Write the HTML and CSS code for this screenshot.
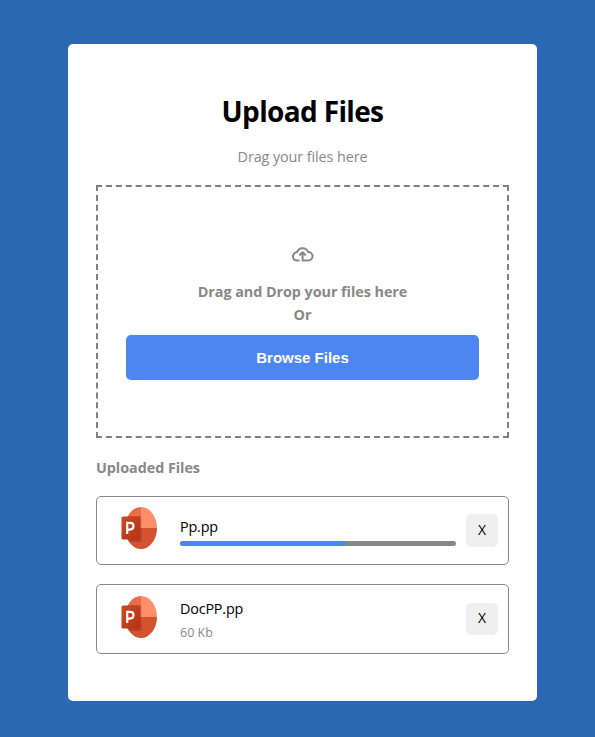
FILE: index.html
```html
<!DOCTYPE html>
<html lang="en">
<head>
<meta charset="utf-8">
<title>Upload Files</title>
<link rel="stylesheet" href="styles.css">
</head>
<body>
<svg class="defs" aria-hidden="true">
  <defs>
    <linearGradient id="badge" x1="0" y1="0" x2="1" y2="1"><stop offset="0" stop-color="#ca4c28"/><stop offset="1" stop-color="#b7310f"/></linearGradient>
    <clipPath id="disc"><ellipse cx="20" cy="21" rx="16" ry="21"/></clipPath>
    <symbol id="ppt" viewBox="0 0 37 42">
      <g clip-path="url(#disc)">
        <path fill="#ed6c47" d="M0 0h20v21H0z"/>
        <path fill="#ff8f6b" d="M20 0h17v21H20z"/>
        <path fill="#d35230" d="M0 21h37v21H0z"/>
        <path fill="#000" opacity=".16" d="M3 9h16q1.500 0 1.500 1.500V33.500q0 1.500-1.500 1.500H3z"/>
      </g>
      <rect x=".5" y="9.500" width="18.500" height="23" rx="1.500" fill="url(#badge)"/>
      <path fill="none" stroke="#fff" stroke-width="2.200" d="M6.200 27V15.800h2.800c2.300 0 3.500 1.100 3.500 3.300s-1.400 3.500-3.600 3.500H6.200"/>
    </symbol>
  </defs>
</svg>
<main class="card">
  <h1 class="title">Upload Files</h1>
  <p class="subtitle">Drag your files here</p>
  <section class="dropzone">
    <svg class="cloud" viewBox="0 0 22 16" aria-hidden="true"><path d="M7.700 14.500H5.200A4.100 4.100 0 0 1 4.900 6.300 6 6 0 0 1 16.200 6.100 4.200 4.200 0 0 1 16.500 14.500H10.600V6.700M7.300 9.500l3.300-3.300 3.300 3.300"/></svg>
    <p class="hint hint-main">Drag and Drop your files here</p>
    <p class="hint">Or</p>
    <button class="browse">Browse Files</button>
  </section>
  <h2 class="section-title">Uploaded Files</h2>
  <div class="files">
    <article class="file">
      <svg class="file-icon"><use href="#ppt"/></svg>
      <div class="info">
        <span class="name">Pp.pp</span>
        <div class="track"><div class="fill" style="width:60%"></div></div>
      </div>
      <button class="remove">X</button>
    </article>
    <article class="file file-done">
      <svg class="file-icon"><use href="#ppt"/></svg>
      <div class="info">
        <span class="name name-done">DocPP.pp</span>
        <span class="size">60 Kb</span>
      </div>
      <button class="remove">X</button>
    </article>
  </div>
</main>
</body>
</html>
```

FILE: styles.css
```css
* { box-sizing: border-box; margin: 0; padding: 0; }
body {
  background: #2b67b3;
  font-family: "Open Sans", "Noto Sans", sans-serif;
  font-size: 14.4px;
  padding: 44px 58px 36px 68px;
}
.defs { display: block; width: 0; height: 0; }
.card {
  width: 469px;
  height: 657px;
  padding: 47px 28px 0;
  background: #fff;
  border-radius: 5px;
}
.title { height: 40px; line-height: 40px; font-size: 28px; text-align: center; letter-spacing: -0.65px; }
.subtitle { margin-top: 15px; height: 22px; line-height: 22px; text-align: center; color: #888; letter-spacing: -0.1px; }
.dropzone {
  display: flex;
  flex-direction: column;
  align-items: center;
  height: 253px;
  margin-top: 17px;
  padding: 59px 28px 0;
  border: 2px dashed #808080;
}
.cloud { width: 22px; height: 16px; fill: none; stroke: #888; stroke-width: 2; stroke-linejoin: round; }
.hint { height: 23px; line-height: 23px; color: #888; font-weight: 700; letter-spacing: -0.06px; }
.hint-main { margin-top: 18px; }
.browse {
  width: 100%;
  height: 45px;
  margin-top: 9px;
  border: 0;
  border-radius: 5px;
  background: #4d86f1;
  color: #fff;
  font: 700 15px "Liberation Sans", sans-serif;
}
.section-title { height: 22px; margin-top: 19px; line-height: 22px; font-size: 14.4px; color: #888; letter-spacing: -0.06px; }
.files { display: grid; gap: 19px; margin-top: 17px; }
.file {
  display: flex;
  align-items: center;
  height: 69px;
  padding: 0 10px 0 24px;
  border: 1px solid #888;
  border-radius: 5px;
}
.file-done { height: 70px; }
.file-icon { width: 37px; height: 42px; margin-top: -5px; }
.info { display: flex; flex-direction: column; width: 276px; margin: 0 10px 0 22px; }
.name { height: 22px; line-height: 22px; letter-spacing: -0.2px; color: #000; }
.name-done { margin-top: 2px; }
.track { height: 5px; margin-top: 3px; background: #888; border-radius: 3px; overflow: hidden; }
.fill { height: 5px; background: #4d86f1; border-radius: 3px; }
.size { height: 20px; margin-top: 3px; line-height: 20px; font-size: 12.500px; color: #888; }
.remove { width: 32px; height: 33px; padding-bottom: 3px; border: 0; border-radius: 5px; background: #efefef; color: #000; font: 14px "Open Sans", sans-serif; }
.file-done .remove { height: 32px; }
```
